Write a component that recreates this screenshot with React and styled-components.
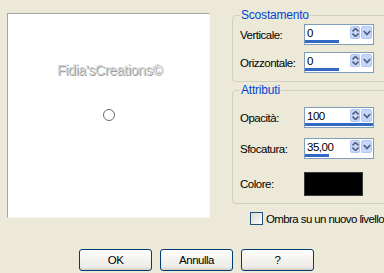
import React from "react";
import styled, { createGlobalStyle } from "styled-components";

const GlobalStyle = createGlobalStyle`
  body {
    margin: 0;
    background: #ece9d8;
    overflow: hidden;
    font-family: "Liberation Sans", Arial, sans-serif;
    font-size: 11.5px;
    letter-spacing: -0.5px;
    color: #000;
  }
`;

const Dialog = styled.div`
  width: 384px;
  height: 273px;
  display: flex;
  flex-direction: column;
  background: #ece9d8;
  overflow: hidden;
`;

const TopRow = styled.div`
  height: 240px;
  display: flex;
  align-items: flex-start;
  padding-left: 7px;
`;

const Preview = styled.div`
  position: relative;
  flex-shrink: 0;
  width: 203px;
  height: 205px;
  margin-top: 13px;
  box-sizing: border-box;
  background: #fff;
  border-top: 1px solid #a7a69b;
  border-left: 1px solid #a7a69b;
  border-right: 1px solid #f8f7f2;
  border-bottom: 1px solid #f8f7f2;
`;

const Watermark = styled.span`
  position: absolute;
  left: 49px;
  top: 48px;
  font-size: 14px;
  letter-spacing: -0.3px;
  color: #d4d4d4;
  text-shadow: 1px 1px 0 #9a9a9a;
  white-space: nowrap;
`;

const Pointer = styled.div`
  position: absolute;
  left: 95px;
  top: 95px;
  width: 12px;
  height: 12px;
  box-sizing: border-box;
  border: 1px solid #6a6a6a;
  border-radius: 50%;
`;

const Side = styled.div`
  width: 170px;
  flex-shrink: 0;
  margin-left: 22px;
  margin-top: 8px;
  display: flex;
  flex-direction: column;
`;

const Group = styled.fieldset`
  margin: 0 0 ${p => p.$gap || 0}px 0;
  padding: ${p => p.$top}px 7px ${p => p.$bottom}px 7px;
  border: 1px solid #d0d0bf;
  border-radius: 4px;
  display: flex;
  flex-direction: column;
  gap: ${p => p.$rowGap}px;
`;

const Legend = styled.legend`
  padding: 0 1px;
  color: #0046d5;
  font-size: 12px;
  line-height: 14px;
  letter-spacing: -0.2px;
`;

const Row = styled.div`
  display: flex;
  align-items: center;
  height: ${p => p.$h || 21}px;
`;

const Label = styled.span`
  width: 64px;
  flex-shrink: 0;
  white-space: nowrap;
`;

const Field = styled.div`
  width: 70px;
  height: 21px;
  flex-shrink: 0;
  box-sizing: border-box;
  border: 1px solid #7f9db9;
  background: #fff;
  display: flex;
  flex-direction: column;
`;

const FieldTop = styled.div`
  flex: 1;
  display: flex;
  align-items: center;
  padding-left: 2px;
  padding-right: 1px;
`;

const Value = styled.span`
  flex: 1;
`;

const Bar = styled.div`
  height: 3px;
  margin-bottom: 1px;
  background: #316ac5;
`;

const SpinBtn = styled.div`
  width: ${p => p.$w}px;
  height: 13px;
  margin-left: ${p => p.$ml || 0}px;
  box-sizing: border-box;
  background: #c6d6fc;
  border: 1px solid #b4c6ee;
  border-radius: 2px;
  display: flex;
  align-items: center;
  justify-content: center;
`;

const Swatch = styled.div`
  width: 59px;
  height: 24px;
  flex-shrink: 0;
  box-sizing: border-box;
  background: #000;
  border: 1px solid #3a3a3a;
`;

const CheckRow = styled.label`
  display: flex;
  align-items: center;
  gap: 3px;
  margin-top: 8px;
  margin-left: 18px;
  letter-spacing: -0.6px;
  white-space: nowrap;
`;

const Box = styled.span`
  width: 13px;
  height: 13px;
  flex-shrink: 0;
  box-sizing: border-box;
  border: 1px solid #1c5180;
  background: linear-gradient(135deg, #dcdcd7 0%, #f4f4f0 80%, #fff 100%);
`;

const ButtonRow = styled.div`
  display: flex;
  gap: 8px;
  padding: 9px 0 0 79px;
`;

const Button = styled.div`
  width: 73px;
  height: 22px;
  flex-shrink: 0;
  box-sizing: border-box;
  border: 1px solid #003c74;
  border-radius: 3px;
  background: linear-gradient(180deg, #fff 0%, #f3f2ee 50%, #ecebe6 85%, #d6d0c5 100%);
  display: flex;
  align-items: center;
  justify-content: center;
`;

const UpDown = () => (
  <svg width="7" height="9" viewBox="0 0 7 9">
    <path d="M0.5 3.5 L3.5 0.5 L6.5 3.5 M0.5 5.5 L3.5 8.5 L6.5 5.5" fill="none" stroke="#4d6185" strokeWidth="1.6" />
  </svg>
);

const Down = () => (
  <svg width="8" height="6" viewBox="0 0 8 6">
    <path d="M0.8 1 L4 4.5 L7.2 1" fill="none" stroke="#4d6185" strokeWidth="1.8" />
  </svg>
);

const SpinField = ({ value, pct }) => (
  <Field>
    <FieldTop>
      <Value>{value}</Value>
      <SpinBtn $w={10}>
        <UpDown />
      </SpinBtn>
      <SpinBtn $w={11} $ml={1}>
        <Down />
      </SpinBtn>
    </FieldTop>
    <Bar style={{ width: `${pct}%` }} />
  </Field>
);

const App = () => (
  <Dialog>
    <GlobalStyle />
    <TopRow>
      <Preview>
        <Watermark>Fidia'sCreations©</Watermark>
        <Pointer />
      </Preview>
      <Side>
        <Group $top={2} $bottom={8} $rowGap={7} $gap={1}>
          <Legend>Scostamento</Legend>
          <Row>
            <Label>Verticale:</Label>
            <SpinField value="0" pct={50} />
          </Row>
          <Row>
            <Label>Orizzontale:</Label>
            <SpinField value="0" pct={50} />
          </Row>
        </Group>
        <Group $top={10} $bottom={7} $rowGap={10}>
          <Legend>Attributi</Legend>
          <Row>
            <Label>Opacità:</Label>
            <SpinField value="100" pct={100} />
          </Row>
          <Row>
            <Label>Sfocatura:</Label>
            <SpinField value="35,00" pct={35} />
          </Row>
          <Row $h={24} style={{ marginTop: 3 }}>
            <Label>Colore:</Label>
            <Swatch />
          </Row>
        </Group>
        <CheckRow>
          <Box />
          Ombra su un nuovo livello
        </CheckRow>
      </Side>
    </TopRow>
    <ButtonRow>
      <Button>OK</Button>
      <Button>Annulla</Button>
      <Button>?</Button>
    </ButtonRow>
  </Dialog>
);

export default App;
